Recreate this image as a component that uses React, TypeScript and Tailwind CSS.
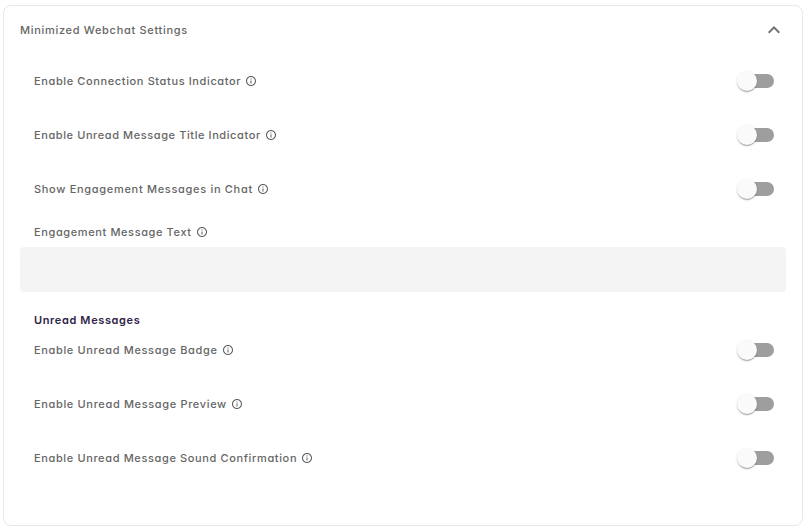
import React from 'react';

function InfoIcon() {
  return (
    <svg className="ml-1 h-3 w-3 shrink-0 fill-[#5c5c5c]" viewBox="0 0 24 24" aria-hidden="true">
      <path d="M11 7h2v2h-2zm0 4h2v6h-2zm1-9C6.48 2 2 6.48 2 12s4.48 10 10 10 10-4.48 10-10S17.52 2 12 2zm0 18c-4.41 0-8-3.59-8-8s3.59-8 8-8 8 3.59 8 8-3.59 8-8 8z" />
    </svg>
  );
}

function Toggle() {
  return (
    <button
      type="button"
      role="switch"
      aria-checked="false"
      className="flex h-3.5 w-[34px] items-center rounded-full bg-[#9e9e9e]"
    >
      <span className="-ml-[3px] h-5 w-5 shrink-0 rounded-full bg-[#fafafa] shadow-[0_2px_1px_-1px_rgba(0,0,0,0.2),0_1px_1px_0_rgba(0,0,0,0.14),0_1px_3px_0_rgba(0,0,0,0.12)]" />
    </button>
  );
}

function Label({ text, tracking }: { text: string; tracking: string }) {
  return (
    <span className="flex items-center">
      <span className={`whitespace-nowrap ${tracking}`}>{text}</span>
      <InfoIcon />
    </span>
  );
}

function SettingRow({ text, tracking }: { text: string; tracking: string }) {
  return (
    <div className="flex h-[54px] items-center justify-between pr-3 pl-3.5">
      <Label text={text} tracking={tracking} />
      <Toggle />
    </div>
  );
}

export default function App() {
  return (
    <div className="h-[531px] bg-white pt-[5px] pl-[3px] font-['Inter',sans-serif] text-[11px] leading-4 font-medium text-[#666] [font-feature-settings:'cv11']">
      <section className="h-[521px] w-[800px] rounded-lg border border-[#e8e8e8] px-4">
        <header className="flex h-12 items-center justify-between">
          <h2 className="tracking-[0.69px]">Minimized Webchat Settings</h2>
          <svg className="h-6 w-6 fill-[#707070]" viewBox="0 0 24 24" aria-hidden="true">
            <path d="m12 8-6 6 1.41 1.41L12 10.83l4.59 4.58L18 14z" />
          </svg>
        </header>
        <SettingRow text="Enable Connection Status Indicator" tracking="tracking-[0.62px]" />
        <SettingRow text="Enable Unread Message Title Indicator" tracking="tracking-[0.59px]" />
        <SettingRow text="Show Engagement Messages in Chat" tracking="tracking-[0.69px]" />
        <div className="flex h-[31px] items-center pl-3.5">
          <Label text="Engagement Message Text" tracking="tracking-[0.61px]" />
        </div>
        <div className="h-[45px] rounded bg-[#f4f4f4]" />
        <h3 className="mt-5 pl-3.5 font-semibold tracking-[0.63px] text-[#2f2348]">Unread Messages</h3>
        <div className="-mt-[5px]">
          <SettingRow text="Enable Unread Message Badge" tracking="tracking-[0.64px]" />
          <SettingRow text="Enable Unread Message Preview" tracking="tracking-[0.65px]" />
          <SettingRow text="Enable Unread Message Sound Confirmation" tracking="tracking-[0.63px]" />
        </div>
      </section>
    </div>
  );
}
